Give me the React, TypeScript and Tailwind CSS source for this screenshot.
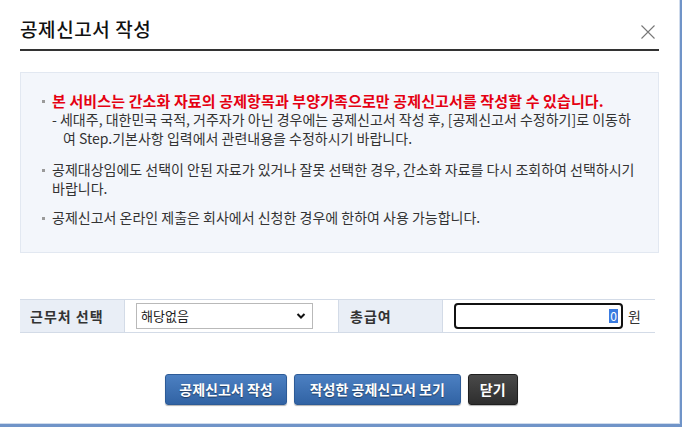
import React from 'react';

const font = { fontFamily: '"Noto Sans CJK KR", "Noto Sans", sans-serif' };

const Bullet: React.FC<{ children: React.ReactNode; className?: string }> = ({ children, className }) => (
  <div className={`relative pl-[11px] ${className ?? ''}`}>
    <span className="absolute left-[1px] top-[9px] w-[3px] h-[3px] bg-[#9a9a9a]" />
    {children}
  </div>
);

const btnBlue =
  'h-[31px] rounded-[3px] border border-[#2d5b97] bg-gradient-to-b from-[#4c80c2] to-[#3163a4] shadow-[0_1px_1px_rgba(0,0,0,0.3)] [text-shadow:0_1px_1px_rgba(0,0,0,0.45)]';

const App: React.FC = () => {
  return (
    <div className="w-[682px] h-[427px] bg-[#7094c8] pr-[2px] pb-[3px]" style={font}>
      <div className="w-full h-full bg-white border-r border-b border-[#cfdbec] flex flex-col">
        {/* header */}
        <div className="flex items-center justify-between px-5 pt-[10px] h-[49px]">
          <h1 className="text-[19px] font-medium text-[#111] tracking-[0.6px]">공제신고서 작성</h1>
          <button className="w-[16px] h-[16px] mr-[3px] mt-[4px] text-[#777]">
            <svg viewBox="0 0 16 16" className="w-4 h-4" fill="none" stroke="currentColor" strokeWidth="1.1">
              <path d="M1.5 1.5 L14.5 14.5 M14.5 1.5 L1.5 14.5" />
            </svg>
          </button>
        </div>
        <div className="mx-5 h-[2px] bg-[#333]" />

        {/* notice box */}
        <div className="mx-5 mt-[21px] h-[181px] bg-[#f3f6fb] border border-[#e2e8f1] pl-5 pr-3 pt-[18px] text-[14px] leading-[19px] text-[#333]">
          <Bullet>
            <p className="text-[#e50012] font-bold text-[15px] tracking-[0.12px] whitespace-nowrap">
              본 서비스는 간소화 자료의 공제항목과 부양가족으로만 공제신고서를 작성할 수 있습니다.
            </p>
            <p className="whitespace-nowrap">
              - 세대주, 대한민국 국적, 거주자가 아닌 경우에는 공제신고서 작성 후, [공제신고서 수정하기]로 이동하
            </p>
            <p className="whitespace-nowrap pl-[11px]">여 Step.기본사항 입력에서 관련내용을 수정하시기 바랍니다.</p>
          </Bullet>
          <Bullet className="mt-[12px]">
            <p className="whitespace-nowrap">
              공제대상임에도 선택이 안된 자료가 있거나 잘못 선택한 경우, 간소화 자료를 다시 조회하여 선택하시기
            </p>
            <p>바랍니다.</p>
          </Bullet>
          <Bullet className="mt-[10px]">
            <p className="whitespace-nowrap">공제신고서 온라인 제출은 회사에서 신청한 경우에 한하여 사용 가능합니다.</p>
          </Bullet>
        </div>

        {/* form row */}
        <div className="ml-5 mr-[24px] mt-[46px] grid grid-cols-[104px_214px_104px_1fr] h-[34px] border-t border-b border-[#d3dbe7] text-[13px]">
          <div className="bg-[#e9eef6] flex items-center pl-[10px] font-bold text-[14px] tracking-[1px] text-[#333]">근무처 선택</div>
          <div className="flex items-center pl-[11px] border-l border-[#d3dbe7]">
            <div className="w-[177px] h-[26px] border border-[#b9b9b9] bg-white flex items-center justify-between pl-[4px] pr-[6px] text-[13px] text-[#222]">
              <span>해당없음</span>
              <svg viewBox="0 0 10 10" className="w-[10px] h-[10px]" fill="none" stroke="#111" strokeWidth="2">
                <path d="M1.5 3 L5 6.5 L8.5 3" />
              </svg>
            </div>
          </div>
          <div className="bg-[#e9eef6] flex items-center pl-[11px] font-bold text-[14px] tracking-[1px] text-[#333] border-l border-[#d3dbe7]">총급여</div>
          <div className="flex items-center pl-[11px] border-l border-[#d3dbe7]">
            <div className="w-[169px] h-[26px] border-2 border-[#111] rounded-[4px] bg-white flex items-center justify-end pr-[3px]">
              <span className="bg-[#3a7be0] text-white text-[12px] leading-[14px] px-[1px]">0</span>
            </div>
            <span className="ml-[5px] text-[14px] text-[#333]">원</span>
          </div>
        </div>

        {/* buttons */}
        <div className="flex justify-center gap-[7px] mt-[41px] pl-[4px] text-[14px] font-bold text-white">
          <button className={`${btnBlue} px-[13px]`}>공제신고서 작성</button>
          <button className={`${btnBlue} px-[15px]`}>작성한 공제신고서 보기</button>
          <button className="h-[31px] px-[11px] rounded-[3px] border border-[#1f1f1f] bg-gradient-to-b from-[#4a4a4a] to-[#2e2e2e] shadow-[0_1px_1px_rgba(0,0,0,0.3)]">
            닫기
          </button>
        </div>
      </div>
    </div>
  );
};

export default App;
